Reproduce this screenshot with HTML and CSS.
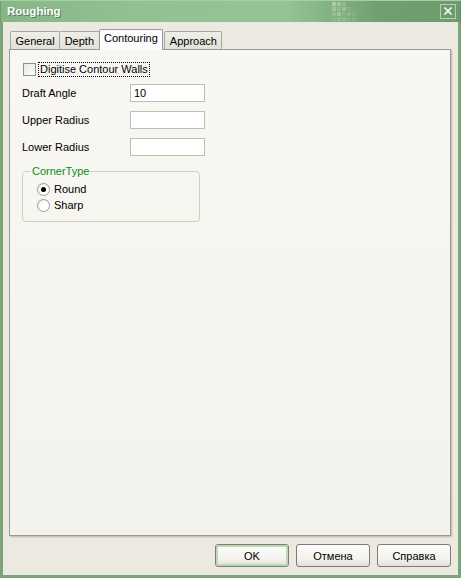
FILE: index.html
```html
<!DOCTYPE html>
<html lang="en">
<head>
	<meta charset="UTF-8">
	<title>Roughing</title>
	<link rel="stylesheet" href="styles.css">
</head>
<body>
<div class="window">
	<div class="titlebar">
		<span class="title">Roughing</span>
		<div class="mosaic">
			<i class="a"></i><i class="b"></i><i class="c"></i><i></i><i></i>
			<i class="b"></i><i class="c"></i><i class="b"></i><i class="d"></i><i></i>
			<i class="c"></i><i class="b"></i><i class="d"></i><i class="c"></i><i class="d"></i>
			<i class="d"></i><i class="c"></i><i class="c"></i><i class="d"></i><i class="d"></i>
		</div>
		<span class="close">
			<svg width="14" height="13" viewBox="0 0 14 13"><path d="M3.5 2.5 L10.5 9.5 M10.5 2.5 L3.5 9.5" stroke="#fff" stroke-width="1.6" fill="none"/></svg>
		</span>
	</div><!-- title -->
	<div class="client">
		<div class="tabs">
			<div class="tab">General</div>
			<div class="tab">Depth</div>
			<div class="tab active">Contouring</div>
			<div class="tab">Approach</div>
		</div>
		<div class="panel">
			<label class="check">
				<span class="box"></span>
				<span class="focus">Digitise Contour Walls</span>
			</label>
			<div class="fields">
				<span>Draft Angle</span>
				<input type="text" value="10">
				<span>Upper Radius</span>
				<input type="text" value="">
				<span>Lower Radius</span>
				<input type="text" value="">
			</div>
			<fieldset class="group">
				<legend>CornerType</legend>
				<div class="option"><span class="radio on"></span>Round</div>
				<div class="option"><span class="radio"></span>Sharp</div>
			</fieldset>
		</div><!-- tab page -->
		<div class="buttons">
			<button class="default">OK</button>
			<button>Отмена</button>
			<button>Справка</button>
		</div>
	</div>
</div>
</body>
</html>
```

FILE: styles.css
```css
* {
	box-sizing: border-box;
}
body {
	margin: 0;
	background: #fff;
}
.window {
	width: 461px;
	height: 578px;
	display: flex;
	flex-direction: column;
	font: 11px "Liberation Sans", Arial, sans-serif;
	color: #000;
}
/* title bar */
.titlebar {
	flex: none;
	height: 22px;
	display: flex;
	align-items: center;
	padding-left: 7px;
	background: linear-gradient(90deg, #86b586 0%, #93c192 30%, #95c394 62%, #80b080 73%, #719f71 82%, #6c9b6c 100%);
	box-shadow: inset 0 1px #a6cfa5, inset 1px 0 #6f9d6f, inset -1px 0 #5f8d5f;
}
.title {
	flex: 1;
	font-weight: bold;
	font-size: 11.5px;
	color: #fff;
	text-shadow: 1px 1px #587f58;
}
.mosaic {
	align-self: flex-start;
	margin: 2px 83px 0 0;
	display: grid;
	grid-template-columns: repeat(5, 5px);
	grid-auto-rows: 5px;
}
.mosaic i {
	display: block;
	margin: 0 1px 1px 0;
}
.mosaic .a { background: rgba(255,255,255,.35); }
.mosaic .b { background: rgba(255,255,255,.25); }
.mosaic .c { background: rgba(255,255,255,.16); }
.mosaic .d { background: rgba(255,255,255,.09); }
.close {
	width: 16px;
	height: 15px;
	margin-right: 5px;
	margin-top: 1px;
	border: 1px solid rgba(255,255,255,.5);
	display: flex;
	align-items: center;
	justify-content: center;
}
/* client area */
.client {
	flex: 1;
	display: flex;
	flex-direction: column;
	background: #ebe9e0;
	border: 3px solid #78a678;
	border-top: 0;
	padding: 7px 7px 8px 6px;
}
.tabs {
	display: flex;
	align-items: flex-end;
	height: 20px;
	padding-left: 1px;
	position: relative;
	z-index: 1;
}
.tab {
	height: 18px;
	padding: 0 4.5px;
	line-height: 18px;
	border: 1px solid #a3a8a4;
	border-bottom: 0;
	border-radius: 2px 2px 0 0;
	margin-right: -1px;
	background: linear-gradient(#eeede7, #e3e2d9);
}
.tab.active {
	height: 21px;
	line-height: 17px;
	margin: 0 1px -1px 0;
	background: #fcfcfe;
	border-color: #919b9c;
	position: relative;
}
.panel {
	flex: 1;
	border: 1px solid #919b9c;
	background: linear-gradient(#f8f7f3, #f3f2ec);
	box-shadow: 1px 1px 0 #c9c6b6, 2px 2px 0 #dfdccf;
	padding: 12px 0 0 13px;
}
.check {
	display: flex;
	align-items: center;
	height: 15px;
}
.box {
	width: 13px;
	height: 13px;
	border: 1px solid #8f918c;
	background: linear-gradient(135deg, #e9e9e4, #fdfdfb);
	margin-right: 2px;
}
.focus {
	border: 1px dotted #000;
	padding: 0 1px;
	line-height: 13px;
}
.fields {
	display: grid;
	grid-template-columns: 108px 75px;
	grid-auto-rows: 18px;
	row-gap: 9px;
	align-items: center;
	margin: 7px 0 0 -1px;
}
.fields input {
	height: 18px;
	width: 75px;
	margin: 0;
	border: 1px solid #bebfad;
	background: #fff;
	padding: 0 3px;
	font: inherit;
	outline: none;
}
.group {
	width: 178px;
	margin: 9px 0 0 -1px;
	border: 1px solid #d0d0bf;
	border-radius: 4px;
	padding: 3px 0 8px 14px;
}
.group legend {
	color: #108a10;
	padding: 0 1px;
	margin-left: -6px;
	line-height: 13px;
}
.option {
	display: flex;
	align-items: center;
	height: 16px;
}
.radio {
	width: 13px;
	height: 13px;
	border: 1px solid #999a96;
	border-radius: 50%;
	background: radial-gradient(circle at 65% 65%, #fff 40%, #e4e4de);
	margin-right: 4px;
	display: flex;
	align-items: center;
	justify-content: center;
}
.radio.on::after {
	content: '';
	width: 5px;
	height: 5px;
	border-radius: 50%;
	background: #000;
}
/* dialog buttons */
.buttons {
	display: flex;
	justify-content: flex-end;
	gap: 7px;
	margin-top: 8px;
}
.buttons button {
	width: 74px;
	height: 23px;
	margin: 0;
	padding: 0;
	font: inherit;
	font-weight: normal;
	color: #000;
	border: 1px solid #7c7d78;
	border-radius: 3px;
	background: linear-gradient(#fdfdfb, #f2f1ec 70%, #e2e0d6);
}
.buttons .default {
	box-shadow: inset 0 0 0 2px #bfd8b4;
}
```
